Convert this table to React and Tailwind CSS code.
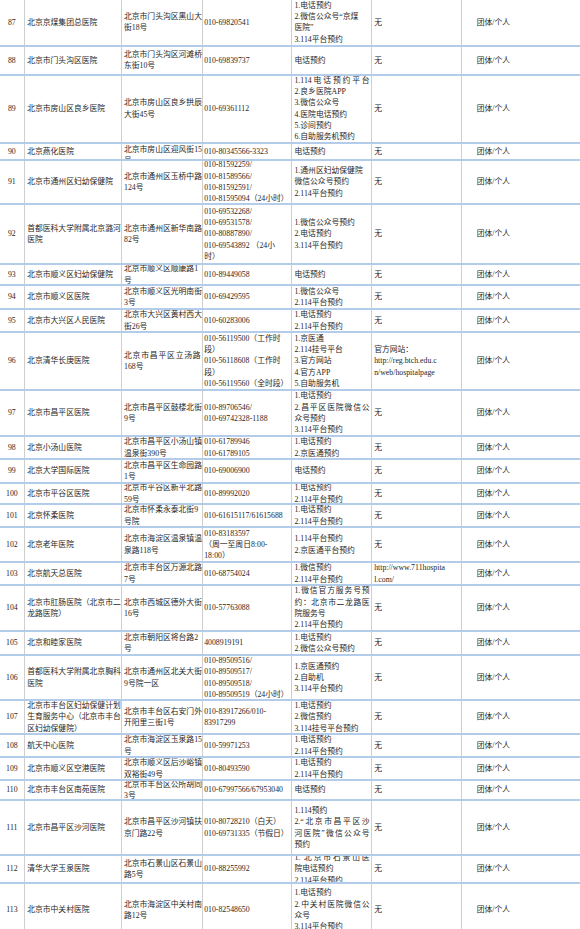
import React from "react";

const rows = [
  { n: "87", h: 46.5, name: ["北京京煤集团总医院"], addr: ["北京市门头沟区黑山大", "街18号"], phone: ["010-69820541"], method: ["1.电话预约", "2.微信公众号“京煤", "医院”", "3.114平台预约"], web: ["无"] },
  { n: "88", h: 29.5, name: ["北京市门头沟区医院"], addr: ["北京市门头沟区河滩桥", "东街10号"], phone: ["010-69839737"], method: ["电话预约"], web: ["无"] },
  { n: "89", h: 67.5, name: ["北京市房山区良乡医院"], addr: ["北京市房山区良乡拱辰", "大街45号"], phone: ["010-69361112"], method: ["^1.114电话预约平台", "2.良乡医院APP", "3.微信公众号", "4.医院电话预约", "5.诊间预约", "6.自助服务机预约"], web: ["无"] },
  { n: "90", h: 17.5, top: true, name: ["北京燕化医院"], addr: ["北京市房山区迎风街15", "号"], phone: ["010-80345566-3323"], method: ["电话预约"], web: ["无"] },
  { n: "91", h: 44, name: ["北京市通州区妇幼保健院"], addr: ["北京市通州区玉桥中路", "124号"], phone: ["010-81592259/", "010-81589566/", "010-81592591/", "010-81595094（24小时）"], method: ["1.通州区妇幼保健院", "微信公众号预约", "2.114平台预约"], web: ["无"] },
  { n: "92", h: 60, name: ["首都医科大学附属北京潞河", "医院"], addr: ["北京市通州区新华南路", "82号"], phone: ["010-69532268/", "010-69531578/", "010-80887890/", "010-69543892 （24小", "时）"], method: ["1.微信公众号预约", "2.电话预约", "3.114平台预约"], web: ["无"] },
  { n: "93", h: 21, name: ["北京市顺义区妇幼保健院"], addr: ["北京市顺义区顺康路1", "号"], phone: ["010-89449058"], method: ["电话预约"], web: ["无"] },
  { n: "94", h: 24, name: ["北京市顺义区医院"], addr: ["北京市顺义区光明南街", "3号"], phone: ["010-69429595"], method: ["1.微信公众号", "2.114平台预约"], web: ["无"] },
  { n: "95", h: 23, name: ["北京市大兴区人民医院"], addr: ["北京市大兴区黄村西大", "街26号"], phone: ["010-60283006"], method: ["1.电话预约", "2.114平台预约"], web: ["无"] },
  { n: "96", h: 58, name: ["北京清华长庚医院"], addr: ["^北京市昌平区立汤路", "168号"], phone: ["010-56119500（工作时", "段）", "010-56118608（工作时", "段）", "010-56119560（全时段）"], method: ["1.京医通", "2.114挂号平台", "3.官方网站", "4.官方APP", "5.自助服务机"], web: ["官方网站：", "http://reg.btch.edu.c", "n/web/hospitalpage"] },
  { n: "97", h: 46, name: ["北京市昌平区医院"], addr: ["北京市昌平区鼓楼北街", "9号"], phone: ["010-89706546/", "010-69742328-1188"], method: ["1.电话预约", "^2.昌平区医院微信公", "众号预约", "3.114平台预约"], web: ["无"] },
  { n: "98", h: 23, name: ["北京小汤山医院"], addr: ["北京市昌平区小汤山镇", "温泉街390号"], phone: ["010-61789946", "010-61789105"], method: ["1.电话预约", "2.京医通预约"], web: ["无"] },
  { n: "99", h: 24, name: ["北京大学国际医院"], addr: ["北京市昌平区生命园路", "1号"], phone: ["010-69006900"], method: ["电话预约"], web: ["无"] },
  { n: "100", h: 21, name: ["北京市平谷区医院"], addr: ["北京市平谷区新平北路", "59号"], phone: ["010-89992020"], method: ["1.电话预约", "2.114平台预约"], web: ["无"] },
  { n: "101", h: 23, name: ["北京怀柔医院"], addr: ["北京市怀柔永泰北街9", "号院"], phone: ["010-61615117/61615688"], method: ["1.电话预约", "2.114平台预约"], web: ["无"] },
  { n: "102", h: 35, name: ["北京老年医院"], addr: ["北京市海淀区温泉镇温", "泉路118号"], phone: ["010-83183597", "（周一至周日8:00-", "18:00）"], method: ["1.114平台预约", "2.京医通平台预约"], web: ["无"] },
  { n: "103", h: 23, name: ["北京航天总医院"], addr: ["北京市丰台区万源北路", "7号"], phone: ["010-68754024"], method: ["1.微信预约", "2.114平台预约"], web: ["http://www.711hospita", "l.com/"] },
  { n: "104", h: 46, name: ["北京市肛肠医院（北京市二", "龙路医院）"], addr: ["北京市西城区德外大街", "16号"], phone: ["010-57763088"], method: ["^1.微信官方服务号预", "^约：北京市二龙路医", "院服务号", "2.114平台预约"], web: ["无"] },
  { n: "105", h: 24, name: ["北京和睦家医院"], addr: ["北京市朝阳区将台路2", "号"], phone: ["4008919191"], method: ["1.电话预约", "2.微信公众号预约"], web: ["无"] },
  { n: "106", h: 45, name: ["首都医科大学附属北京胸科", "医院"], addr: ["北京市通州区北关大街", "9号院一区"], phone: ["010-89509516/", "010-89509517/", "010-89509518/", "010-89509519（24小时）"], method: ["1.京医通预约", "2.自助机", "3.114平台预约"], web: ["无"] },
  { n: "107", h: 34, name: ["北京市丰台区妇幼保健计划", "生育服务中心（北京市丰台", "区妇幼保健院）"], addr: ["北京市丰台区右安门外", "开阳里三街1号"], phone: ["010-83917266/010-", "83917299"], method: ["1.电话预约", "2.微信预约", "3.114挂号平台预约"], web: ["无"] },
  { n: "108", h: 23, name: ["航天中心医院"], addr: ["北京市海淀区玉泉路15", "号"], phone: ["010-59971253"], method: ["1.电话预约", "2.114平台预约"], web: ["无"] },
  { n: "109", h: 23, name: ["北京市顺义区空港医院"], addr: ["北京市顺义区后沙峪镇", "双裕街49号"], phone: ["010-80493590"], method: ["1.电话预约", "2.114平台预约"], web: ["无"] },
  { n: "110", h: 20, name: ["北京市丰台区南苑医院"], addr: ["北京市丰台区公所胡同", "3号"], phone: ["010-67997566/67953040"], method: ["电话预约"], web: ["无"] },
  { n: "111", h: 55, name: ["北京市昌平区沙河医院"], addr: ["北京市昌平区沙河镇扶", "京门路22号"], phone: ["010-80728210（白天）", "010-69731335（节假日）"], method: ["1.114预约", "^2.“北京市昌平区沙", "^河医院”微信公众号", "预约"], web: ["无"] },
  { n: "112", h: 28, name: ["清华大学玉泉医院"], addr: ["北京市石景山区石景山", "路5号"], phone: ["010-88255992"], method: ["^1.  北京市石景山医", "院电话预约", "2.114平台预约"], web: ["无"] },
  { n: "113", h: 54, name: ["北京市中关村医院"], addr: ["北京市海淀区中关村南", "路12号"], phone: ["010-82548650"], method: ["1.电话预约", "^2.中关村医院微信公", "众号", "3.114平台预约"], web: ["无"] },
];

function Lines({ lines }) {
  return lines.map((l, i) =>
    l.startsWith("^") ? (
      <div key={i} className="whitespace-nowrap text-justify [text-align-last:justify] pr-[1px]">
        {l.slice(1)}
      </div>
    ) : (
      <div key={i} className="whitespace-nowrap">
        {l}
      </div>
    )
  );
}

function Cell({ lines, className = "", top = false }) {
  return (
    <div
      className={
        "flex flex-col overflow-hidden border-r border-[#cfcfcf] " +
        (top ? "justify-start " : "justify-center ") +
        className
      }
    >
      <Lines lines={lines} />
    </div>
  );
}

export default function App() {
  return (
    <div
      lang="zh-CN"
      className="w-[580px] h-[929px] overflow-hidden bg-white text-[#262626] text-[7.8px] leading-[11.3px] font-['Liberation_Serif','Noto_Sans_CJK_SC',serif]"
    >
      {rows.map((r) => (
        <div
          key={r.n}
          style={{ height: r.h }}
          className="grid grid-cols-[24.7px_97.3px_80.7px_89.3px_79.7px_90px_1fr] border-b-2 border-[#b3cce9] box-border"
        >
          <div className="flex items-center justify-center border-r border-[#cfcfcf] overflow-hidden">{r.n}</div>
          <Cell lines={r.name} className="pl-[2.5px]" />
          <Cell lines={r.addr} className="pl-[2px]" top={r.top} />
          <Cell lines={r.phone} className="pl-[1.5px]" />
          <Cell lines={r.method} className="pl-[2.5px]" />
          <Cell lines={r.web} className="pl-[2.5px]" />
          <div className="flex items-center pl-[15px] overflow-hidden">团体/个人</div>
        </div>
      ))}
    </div>
  );
}
